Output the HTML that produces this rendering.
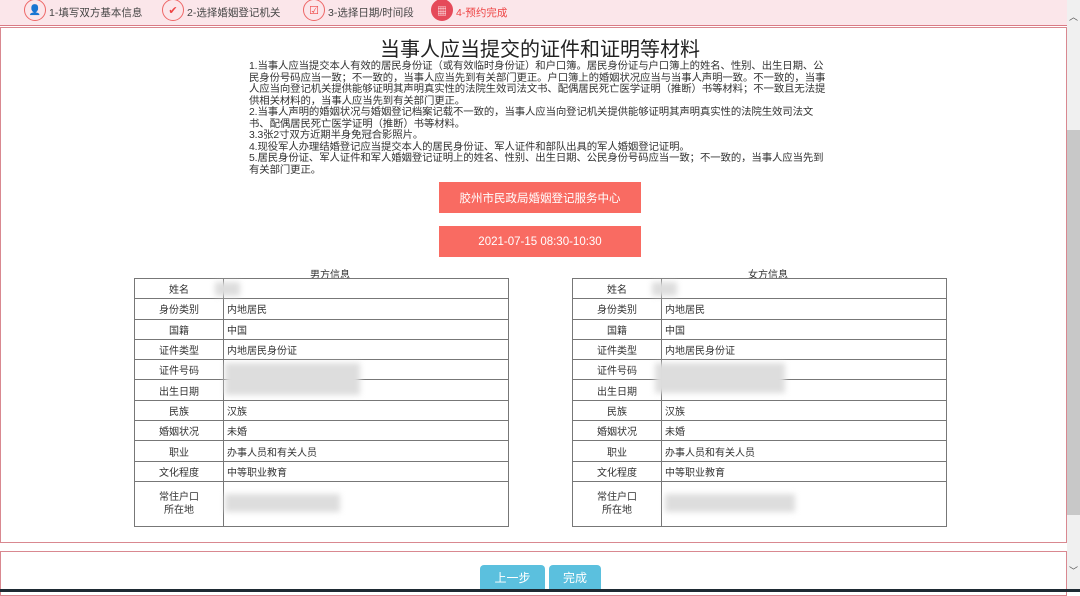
<!DOCTYPE html>
<html><head><meta charset="utf-8"><style>
*{margin:0;padding:0;box-sizing:border-box}
body{width:1080px;height:592px;overflow:hidden;background:#fff;font-family:"Liberation Sans","Noto Sans CJK SC",sans-serif;color:#333;position:relative}
.hdr{position:absolute;left:0;top:0;width:1067px;height:26px;background:#fbe6ea;border-bottom:1px solid #d97a84}
.step{position:absolute;top:0;height:24px;display:flex;align-items:center;font-size:10.5px;color:#444}
.ic{width:22px;height:22px;border:1px solid #e66;border-radius:50%;margin-right:3px;margin-top:-4px;display:flex;align-items:center;justify-content:center}
.box{position:absolute;left:0;width:1067px;border:1px solid #d98890;background:#fff}
.sb{position:absolute;right:0;top:0;width:13px;height:592px;background:#f0f0f0}
.thumb{position:absolute;right:0;top:130px;width:13px;height:385px;background:#c8c8c8}
h1{position:absolute;left:0;width:1080px;top:38px;text-align:center;font-size:20px;line-height:24px;font-weight:normal;color:#222}
.txt{position:absolute;left:249px;top:61px;width:577px;font-size:10.4px;line-height:11.5px;color:#333;letter-spacing:-0.1px}
.btn{position:absolute;left:439px;width:202px;height:31px;background:#f96b62;color:#fff;font-size:11.5px;display:flex;align-items:center;justify-content:center}
table{position:absolute;top:278px;border-collapse:collapse;font-size:10px}
td{border:1px solid #777;height:20.3px;padding:0 3px}
td.l{width:89px;text-align:center}
td.v{width:285px}
.cap{position:absolute;top:266px;font-size:10px}
.blur{position:absolute;background:#ddd;filter:blur(3px)}
.b2{position:absolute;height:24px;border-radius:4px 4px 0 0;background:#5bc0de;color:#fff;font-size:12px;display:flex;align-items:center;justify-content:center;top:565px}
.dark{position:absolute;left:0;top:589px;width:1080px;height:3px;background:#1e2a33}
</style></head><body>
<div class="hdr">
<div class="step" style="left:24px"><div class="ic"><span style="font-size:10px;color:#e44">👤</span></div>1-填写双方基本信息</div>
<div class="step" style="left:162px"><div class="ic" style="color:#e44;font-size:11px">✔</div>2-选择婚姻登记机关</div>
<div class="step" style="left:303px"><div class="ic" style="font-size:11px;color:#e44">☑</div>3-选择日期/时间段</div>
<div class="step" style="left:431px;color:#e44"><div class="ic" style="background:#e54a5a;border-color:#e54a5a;color:#fff;font-size:10px">▦</div>4-预约完成</div>
</div>
<div class="box" style="top:27px;height:516px"></div>
<div class="box" style="top:551px;height:45px"></div>
<h1>当事人应当提交的证件和证明等材料</h1>
<div class="txt">1.当事人应当提交本人有效的居民身份证（或有效临时身份证）和户口簿。居民身份证与户口簿上的姓名、性别、出生日期、公民身份号码应当一致；不一致的，当事人应当先到有关部门更正。户口簿上的婚姻状况应当与当事人声明一致。不一致的，当事人应当向登记机关提供能够证明其声明真实性的法院生效司法文书、配偶居民死亡医学证明（推断）书等材料；不一致且无法提供相关材料的，当事人应当先到有关部门更正。<br>2.当事人声明的婚姻状况与婚姻登记档案记载不一致的，当事人应当向登记机关提供能够证明其声明真实性的法院生效司法文书、配偶居民死亡医学证明（推断）书等材料。<br>3.3张2寸双方近期半身免冠合影照片。<br>4.现役军人办理结婚登记应当提交本人的居民身份证、军人证件和部队出具的军人婚姻登记证明。<br>5.居民身份证、军人证件和军人婚姻登记证明上的姓名、性别、出生日期、公民身份号码应当一致；不一致的，当事人应当先到有关部门更正。</div>
<div class="btn" style="top:182px">胶州市民政局婚姻登记服务中心</div>
<div class="btn" style="top:226px">2021-07-15 08:30-10:30</div>
<div class="cap" style="left:310px">男方信息</div>
<div class="cap" style="left:748px">女方信息</div>
<table style="left:134px"><tr><td class="l">姓名</td><td class="v"></td></tr><tr><td class="l">身份类别</td><td class="v">内地居民</td></tr><tr><td class="l">国籍</td><td class="v">中国</td></tr><tr><td class="l">证件类型</td><td class="v">内地居民身份证</td></tr><tr><td class="l">证件号码</td><td class="v"></td></tr><tr><td class="l">出生日期</td><td class="v"></td></tr><tr><td class="l">民族</td><td class="v">汉族</td></tr><tr><td class="l">婚姻状况</td><td class="v">未婚</td></tr><tr><td class="l">职业</td><td class="v">办事人员和有关人员</td></tr><tr><td class="l">文化程度</td><td class="v">中等职业教育</td></tr><tr><td class="l" style="height:45px;line-height:13px">常住户口<br>所在地</td><td class="v"></td></tr></table>
<table style="left:572px"><tr><td class="l">姓名</td><td class="v"></td></tr><tr><td class="l">身份类别</td><td class="v">内地居民</td></tr><tr><td class="l">国籍</td><td class="v">中国</td></tr><tr><td class="l">证件类型</td><td class="v">内地居民身份证</td></tr><tr><td class="l">证件号码</td><td class="v"></td></tr><tr><td class="l">出生日期</td><td class="v"></td></tr><tr><td class="l">民族</td><td class="v">汉族</td></tr><tr><td class="l">婚姻状况</td><td class="v">未婚</td></tr><tr><td class="l">职业</td><td class="v">办事人员和有关人员</td></tr><tr><td class="l">文化程度</td><td class="v">中等职业教育</td></tr><tr><td class="l" style="height:45px;line-height:13px">常住户口<br>所在地</td><td class="v"></td></tr></table>
<div class="blur" style="left:215px;top:282px;width:25px;height:14px"></div>
<div class="blur" style="left:225px;top:363px;width:135px;height:32px"></div>
<div class="blur" style="left:225px;top:494px;width:115px;height:18px"></div>
<div class="blur" style="left:652px;top:282px;width:25px;height:14px"></div>
<div class="blur" style="left:655px;top:363px;width:130px;height:30px"></div>
<div class="blur" style="left:665px;top:494px;width:130px;height:18px"></div>
<div class="b2" style="left:480px;width:65px">上一步</div>
<div class="b2" style="left:549px;width:52px">完成</div>
<div class="sb"></div><div class="thumb"></div>
<div style="position:absolute;right:2px;top:10px;font-size:9px;color:#555">︿</div>
<div style="position:absolute;right:2px;top:564px;font-size:9px;color:#555">﹀</div>
<div class="dark"></div>
</body></html>
